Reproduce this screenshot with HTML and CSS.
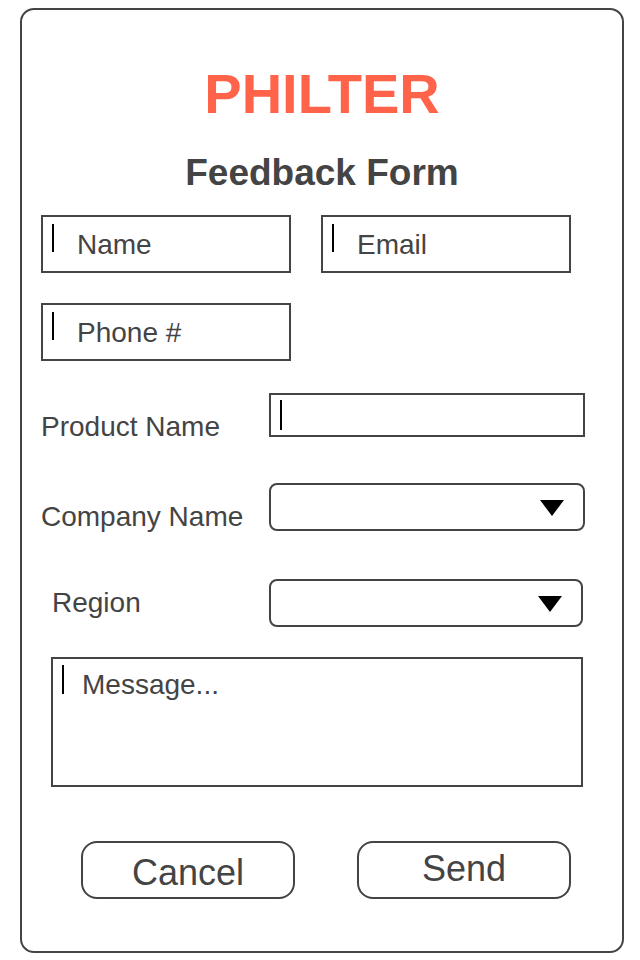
FILE: index.html
```html
<!DOCTYPE html>
<html>
    <head>
        <title>Philter - Feedback Form</title>
        <meta charset="UTF-8">
        <meta name="viewport" content="width=device-width">
        <link rel="stylesheet" href="styles.css">
    </head>
    <body>
        <div class="card">
            <h1 class="brand">PHILTER</h1>
            <h2 class="formtitle">Feedback Form</h2>

            <div class="form">
                <div class="row">
                    <div class="textbox"><span class="caret"></span><span class="hint">Name</span></div>
                    <div class="textbox"><span class="caret"></span><span class="hint">Email</span></div>
                </div>
                <div class="row row-phone">
                    <div class="textbox"><span class="caret"></span><span class="hint">Phone #</span></div>
                </div>

                <div class="row row-product">
                    <label class="fieldlabel">Product Name</label>
                    <div class="textbox wide"><span class="caret tall"></span></div>
                </div>
                <div class="row row-company">
                    <label class="fieldlabel">Company Name</label>
                    <div class="select">
                        <svg class="arrow" width="24" height="16" viewBox="0 0 24 16"><polygon points="0,0 24,0 12,16" fill="#000"/></svg>
                    </div>
                </div>
                <div class="row row-region">
                    <label class="fieldlabel indent">Region</label>
                    <div class="select narrow">
                        <svg class="arrow" width="24" height="16" viewBox="0 0 24 16"><polygon points="0,0 24,0 12,16" fill="#000"/></svg>
                    </div>
                </div>

                <div class="message">
                    <span class="caret"></span><span class="hint">Message...</span>
                </div>

                <div class="buttons">
                    <div class="btn btn-cancel">Cancel</div>
                    <div class="btn btn-send">Send</div>
                </div>
            </div>
        </div>
    </body>
</html>
```

FILE: styles.css
```css
body
{
    margin: 0;
    background: #fff;
    font-family: "Liberation Sans", Arial, sans-serif;
    color: #444;
}
.card
{
    box-sizing: border-box;
    width: 604px;
    height: 945px;
    margin: 8px 0 0 20px;
    padding-top: 56px;
    border: 2px solid #444;
    border-radius: 14px;
}
.brand
{
    margin: 0;
    font-size: 56px;
    line-height: 56px;
    font-weight: bold;
    text-align: center;
    color: #ff634a;
}
.formtitle
{
    margin: 32px 0 0 0;
    font-size: 37px;
    line-height: 37px;
    font-weight: bold;
    text-align: center;
    color: #444;
}
.form
{
    margin-top: 24px;
    padding: 0 19px;
}
.row
{
    display: flex;
    gap: 30px;
}
.row-phone
{
    margin-top: 30px;
}
.row-product
{
    height: 44px;
    margin-top: 32px;
    gap: 0;
}
.row-company
{
    height: 48px;
    margin-top: 46px;
    gap: 0;
}
.row-region
{
    height: 48px;
    margin-top: 48px;
    gap: 0;
}
.textbox
{
    box-sizing: border-box;
    display: flex;
    align-items: center;
    width: 250px;
    height: 58px;
    border: 2px solid #444;
    font-size: 28px;
    line-height: 28px;
}
.textbox.wide
{
    width: 316px;
    height: 44px;
    align-items: flex-start;
}
.caret
{
    align-self: flex-start;
    width: 2px;
    height: 28px;
    margin: 7px 23px 0 9px;
    background: #000;
}
.caret.tall
{
    height: 30px;
    margin-top: 5px;
}
.hint
{
    padding-top: 2px;
}
.fieldlabel
{
    flex: none;
    width: 228px;
    height: 28px;
    margin-top: 20px;
    font-size: 28px;
    line-height: 28px;
    white-space: nowrap;
}
.fieldlabel.indent
{
    margin-top: 10px;
    padding-left: 11px;
    box-sizing: border-box;
}
.select
{
    box-sizing: border-box;
    display: flex;
    align-items: center;
    justify-content: flex-end;
    width: 316px;
    height: 48px;
    padding-right: 19px;
    border: 2px solid #444;
    border-radius: 8px;
}
.select.narrow
{
    width: 314px;
}
.arrow
{
    display: block;
    margin-top: 2px;
}
.message
{
    box-sizing: border-box;
    display: flex;
    width: 532px;
    height: 130px;
    margin: 30px 0 0 10px;
    border: 2px solid #444;
    font-size: 28px;
    line-height: 28px;
}
.message .caret
{
    height: 29px;
    margin: 6px 18px 0 9px;
}
.message .hint
{
    padding-top: 12px;
}
.buttons
{
    display: flex;
    gap: 62px;
    margin: 54px 0 0 40px;
}
.btn
{
    box-sizing: border-box;
    width: 214px;
    height: 58px;
    border: 2px solid #444;
    border-radius: 16px;
    font-size: 36px;
    line-height: 36px;
    text-align: center;
}
.btn-cancel
{
    padding-top: 12px;
}
.btn-send
{
    padding-top: 8px;
}
```
